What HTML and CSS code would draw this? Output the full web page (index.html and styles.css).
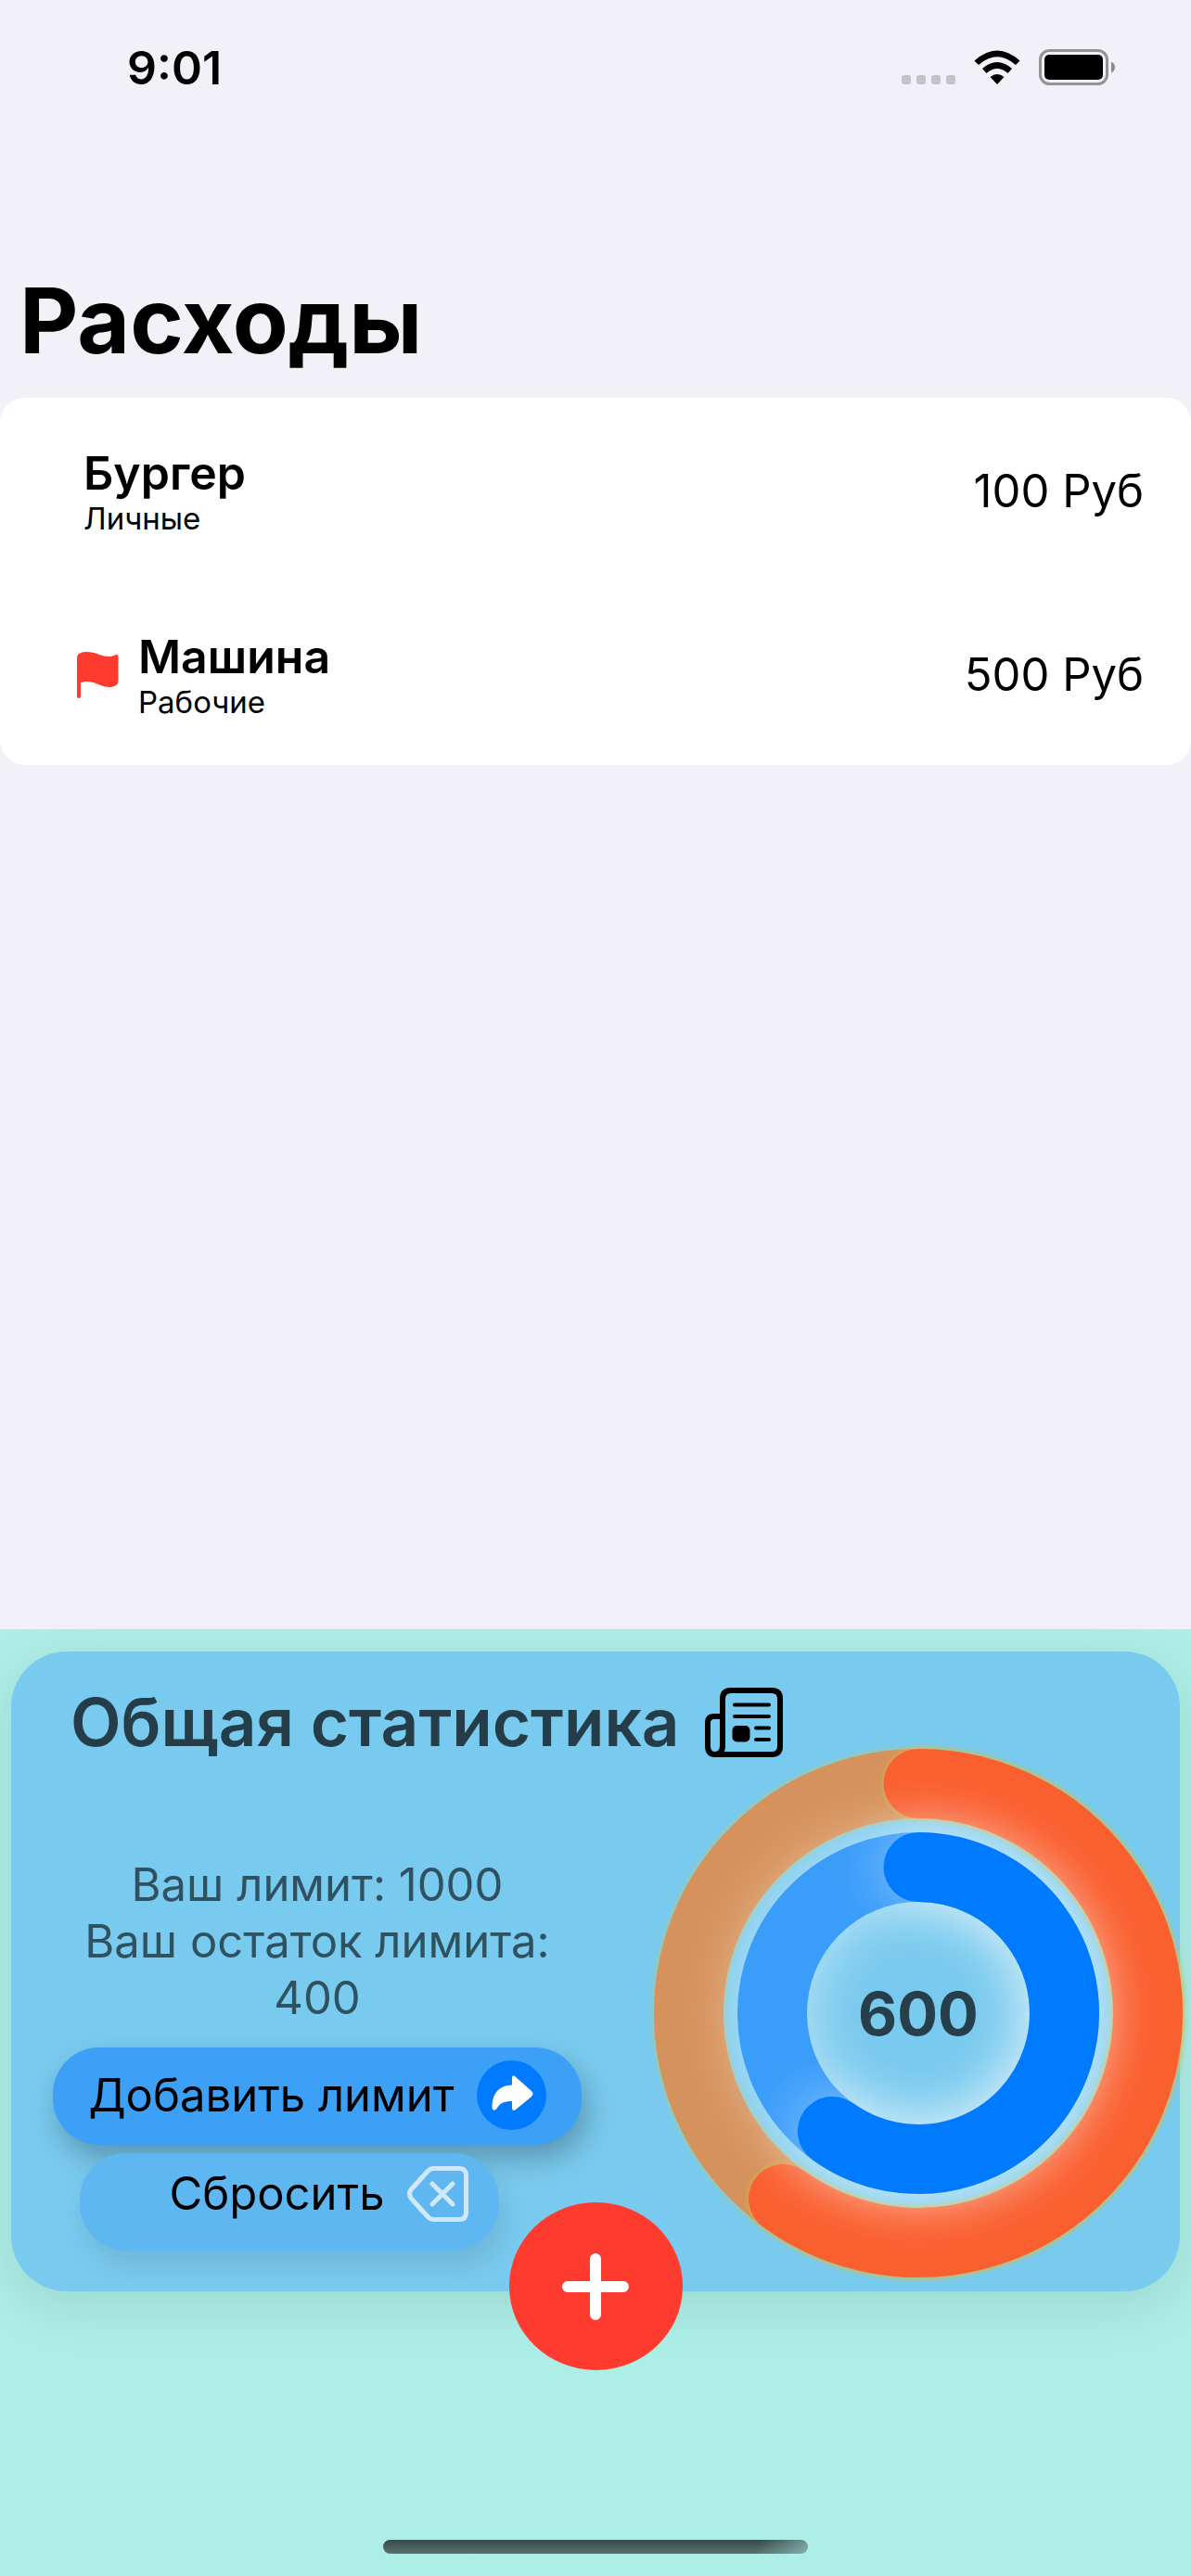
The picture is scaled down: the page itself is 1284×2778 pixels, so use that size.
FILE: index.html
```html
<!DOCTYPE html>
<html lang="ru">
<head>
<meta charset="utf-8">
<meta name="viewport" content="width=device-width, initial-scale=1">
<title>Расходы</title>
<link rel="stylesheet" href="styles.css">
</head>
<body>
<div class="screen">
  <header class="status">
    <time class="status-time">9:01</time>
    <div class="status-icons">
      <span class="signal"><i></i><i></i><i></i><i></i></span>
      <svg class="wifi" width="50" height="38" viewBox="0 0 50 38" aria-hidden="true">
        <path d="M0.5 11.5 Q25 -10.500 49.500 11.500 L45 16 Q25 -1.500 5 16 Z"/>
        <path d="M9 20 Q25 6 41 20 L36.500 25 Q25 15 13.500 25 Z"/>
        <path d="M17.500 29 Q25 23 32.500 29 L25 37 Z"/>
      </svg>
      <svg class="battery" width="84" height="40" viewBox="0 0 84 40" aria-hidden="true">
        <rect x="1.500" y="1.500" width="72" height="36" rx="10" fill="none" stroke="#949496" stroke-width="3"/>
        <rect x="6" y="6" width="63" height="27" rx="5"/>
        <path d="M78 13.500 q4 2 4 6 t-4 6z" fill="#8c8c8e"/>
      </svg>
    </div>
  </header>

  <main class="expenses">
    <h1 class="title">Расходы</h1>
    <ul class="list">
      <li class="row row-plain">
        <div class="item">
          <h2 class="item-name">Бургер</h2>
          <p class="item-type">Личные</p>
        </div>
        <span class="amount">100 Руб</span>
      </li>
      <li class="row">
        <svg class="flag" width="45" height="50" viewBox="0 0 45 50" aria-label="Рабочие" role="img">
          <path d="M0 7 C0 2 4 0 10 0 C21 0 25 5 35 5 C39 5 41 3 43 3 Q44.500 3 44.500 5 V31 C44.500 36 40 38 35 38 C25 38 21 32 11 32 C8 32 6 32.500 4 33 V48 Q4 50 2 50 Q0 50 0 48 Z"/>
        </svg>
        <div class="item">
          <h2 class="item-name">Машина</h2>
          <p class="item-type">Рабочие</p>
        </div>
        <span class="amount">500 Руб</span>
      </li>
    </ul>
  </main>

  <footer class="panel">
    <section class="card">
      <div class="card-head">
        <h2 class="card-title">Общая статистика</h2>
        <svg width="84" height="75" viewBox="0 0 84 75" fill="none" stroke="#000" stroke-width="6" stroke-linecap="round" aria-hidden="true">
          <path d="M19 63 V12 Q19 3 28 3 H72 Q81 3 81 12 V63 Q81 72 72 72 H11 Q3 72 3 63 V38 Q3 31 10 31 H19"/>
          <path d="M19 62 Q19 72 11 72"/>
          <path d="M32 18.500 H69 M32 31 H69 M55 43.500 H69 M55 56 H69" stroke-width="4"/>
          <rect x="29.500" y="41" width="19" height="17.500" rx="5" fill="#000" stroke="none"/>
        </svg>
      </div>
      <div class="card-body">
        <div class="controls">
          <p class="limits">Ваш лимит: 1000<br>Ваш остаток лимита: 400</p>
          <button class="btn btn-add" type="button">
            Добавить лимит
            <svg width="75" height="75" viewBox="0 0 75 75" aria-hidden="true">
              <circle cx="37.500" cy="37.500" r="37.500" fill="#007aff"/>
              <path d="M38 19 Q38 15 41 17 L59 33 Q62 36 59 39 L42 53 Q38 55.500 38 51 V44 C29 44 25 46 21.500 52 Q19 55 17.500 53 Q16.500 52 16.500 49 C17 34 25 27 38 26.500 Z" fill="#fff"/>
            </svg>
          </button>
          <button class="btn btn-reset" type="button">
            Сбросить
            <svg width="66" height="60" viewBox="0 0 66 60" fill="none" stroke="#cfe8fb" stroke-width="5" stroke-linecap="round" stroke-linejoin="round" aria-hidden="true">
              <path d="M28 2.500 H56 Q63.500 2.500 63.500 10 V50 Q63.500 57.500 56 57.500 H28 Q25 57.500 22.500 55 L4 34.500 Q1 30 4 25.500 L22.500 5 Q25 2.500 28 2.500 Z"/>
              <path d="M27 19 L49 41 M49 19 L27 41"/>
            </svg>
          </button>
        </div>
        <svg class="chart" viewBox="0 0 570 570" role="img" aria-label="600 из 1000">
          <g fill="none" stroke-width="75" stroke-linecap="round">
            <circle class="outer-track" cx="285" cy="285" r="247.500"/>
            <path class="outer-value" d="M285 37.500 A247.500 247.500 0 1 1 139.500 485.200"/>
            <circle class="inner-track" cx="285" cy="285" r="157.500"/>
            <path class="inner-value" d="M285 127.500 A157.500 157.500 0 1 1 192.400 412.400"/>
          </g>
          <text class="chart-total" x="285" y="309">600</text>
        </svg>
      </div>
    </section>
    <button class="fab" type="button" aria-label="Добавить расход">
      <svg width="72" height="72" viewBox="0 0 72 72" stroke="#fff" stroke-width="12" stroke-linecap="round" aria-hidden="true">
        <path d="M36 6 V66 M6 36 H66"/>
      </svg>
    </button>
    <div class="home-bar"></div>
  </footer>
</div>
</body>
</html>
```
FILE: styles.css
```css
* {
  box-sizing: border-box;
  margin: 0;
  padding: 0;
}

body {
  background: #f2f1f7;
  color: #000;
  font-family: Inter, "Liberation Sans", sans-serif;
  font-size: 49px;
  line-height: 61px;
}

button {
  border: 0;
  font: inherit;
  color: inherit;
  cursor: pointer;
}

svg {
  flex: none;
}

.screen {
  min-height: 100vh;
  display: flex;
  flex-direction: column;
}

.status {
  display: flex;
  justify-content: space-between;
  align-items: center;
  height: 146px;
  padding: 0 80px 0 137px;
}

.status-time {
  font-size: 50px;
  font-weight: 600;
}

.status-icons {
  display: flex;
  align-items: center;
  gap: 20px;
}

.signal {
  display: flex;
  gap: 6px;
  padding-top: 26px;
}

.signal i {
  width: 10px;
  height: 10px;
  border-radius: 3px;
  background: #c3c2c8;
}

.expenses {
  flex: 1;
}

.title {
  padding: 140px 21px 23px;
  font-size: 98px;
  line-height: 120px;
  font-weight: 700;
}

.list {
  list-style: none;
  background: #fff;
  border-radius: 27px;
}

.row {
  display: flex;
  align-items: center;
  gap: 21px;
  height: 198px;
  padding: 3px 51px 0 83px;
}

.row-plain {
  padding-left: 90px;
}

.flag {
  fill: #ff3b30;
}

.item {
  flex: 1;
}

.item-name {
  font-size: 50px;
  font-weight: 600;
  line-height: 58px;
}

.item-type {
  font-size: 33px;
  line-height: 40px;
}

.panel {
  display: flex;
  flex-direction: column;
  align-items: center;
  padding: 24px 12px;
  background: #adeee7;
}

.card {
  align-self: stretch;
  padding: 30px 0 15px;
  border-radius: 60px;
  background: #79caef;
  box-shadow: 0 15px 60px rgba(0, 0, 0, 0.1);
}

.card-head {
  display: flex;
  align-items: center;
  gap: 27px;
  height: 92px;
  padding-left: 64px;
}

.card-title {
  font-size: 71px;
  line-height: 90px;
  font-weight: 600;
  color: #243d48;
}

.card-body {
  display: flex;
  align-items: flex-end;
  gap: 78px;
  margin: -17px -3px 0 45px;
}

.controls {
  flex: 1;
  display: flex;
  flex-direction: column;
  align-items: center;
  padding-bottom: 29px;
}

.limits {
  text-align: center;
  color: #305160;
  margin-bottom: 23px;
}

.btn {
  display: flex;
  align-items: center;
  justify-content: center;
  height: 105px;
  border-radius: 50px;
}

.btn-add {
  align-self: stretch;
  gap: 24px;
  padding-bottom: 2px;
  background: #3da0f7;
  box-shadow: 6px 15px 30px rgba(0, 0, 0, 0.25);
}

.btn-reset {
  gap: 24px;
  margin: 9px 60px 0 0;
  padding: 0 33px 18px 96px;
  background: #5fb7f1;
  box-shadow: 6px 15px 30px rgba(0, 0, 0, 0.1);
}

.chart {
  width: 570px;
  overflow: visible;
}

.outer-track {
  stroke: #d6925c;
  filter: drop-shadow(0 0 3px #b9c878);
}

.outer-value {
  stroke: #fa5f2f;
  filter: drop-shadow(0 0 3px #d8b848);
}

.inner-track {
  stroke: #3a9dfa;
  filter: drop-shadow(0 0 30px rgba(255, 255, 255, 0.5));
}

.inner-value {
  stroke: #007aff;
  filter: drop-shadow(0 0 30px rgba(255, 255, 255, 0.45));
}

.chart-total {
  font-size: 65px;
  font-weight: 700;
  text-anchor: middle;
  fill: #263f4a;
}

.fab {
  display: grid;
  place-items: center;
  position: relative;
  width: 187px;
  height: 181px;
  margin-top: -96px;
  border-radius: 50%;
  background: #ff3b30;
}

.home-bar {
  width: 458px;
  height: 15px;
  margin-top: 183px;
  border-radius: 8px;
  background:
    linear-gradient(110deg, transparent 88%, rgba(173, 238, 231, 0.5) 100%),
    linear-gradient(#384a48, #597370);
}
```
